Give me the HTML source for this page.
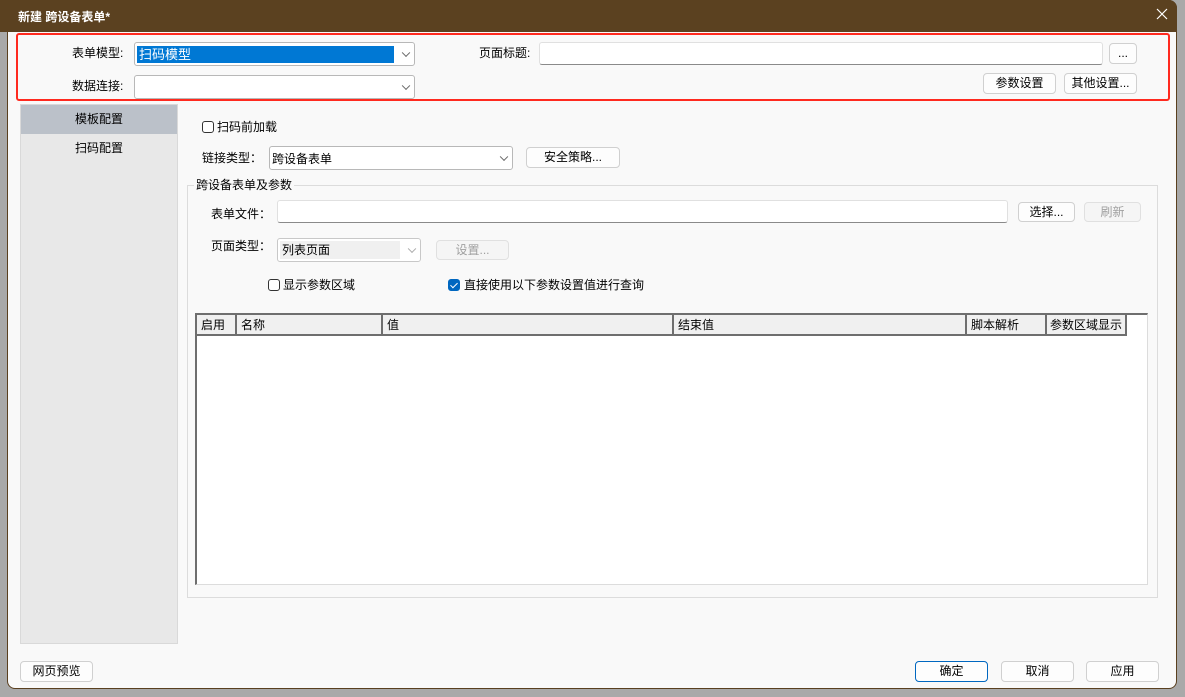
<!DOCTYPE html><html><head><meta charset="utf-8"><style>
*{box-sizing:border-box;margin:0;padding:0}
body{width:1185px;height:697px;background:#a9a9a9;position:relative;overflow:hidden;font-family:"Liberation Sans","Noto Sans CJK SC",sans-serif;font-size:12px;color:#000}
.a{position:absolute}
.win{left:7px;top:0;width:1170px;height:689px;background:#f9f9f9;border:1px solid #5a4020;border-radius:0 8px 8px 8px;overflow:hidden}
.title{left:0;top:0;width:1185px;height:32px;background:#5b4120}
.btn{position:absolute;background:#fdfdfd;border:1px solid #d0d0d0;border-radius:4px;text-align:center;line-height:18px;font-size:12px}
.dis{color:#a0a0a0;background:#f5f5f5;border-color:#e0e0e0}
.combo{position:absolute;background:#fff;border:1px solid #b8b8b8;border-radius:3px}
.combo .ar{position:absolute;right:5px;top:50%;width:6px;height:6px;border-right:1px solid #666;border-bottom:1px solid #666;transform:translateY(-70%) rotate(45deg)}
.inp{position:absolute;background:#fff;border:1px solid #e0e0e0;border-bottom:1px solid #8a8a8a;border-radius:3px}
.lbl{position:absolute;font-size:12px;line-height:16px}
.cb{position:absolute;width:12px;height:12px;border:1px solid #333;border-radius:3px;background:#fff}
.th{position:absolute;top:315px;height:21px;background:#f0f0f0;border-right:2px solid #6e6e6e;border-bottom:2px solid #6e6e6e;padding-left:4px;line-height:20px;font-size:12px}
</style></head><body>
<div class="a win" style="border-radius:0 8px 8px 8px"></div>
<div class="a title" style="left:7px;width:1170px;border-radius:0 8px 0 0"></div>
<div class="a title" style="width:7px"></div>
<div class="a" style="left:18px;top:8px;color:#fff;font-weight:bold;font-size:12px">新建 跨设备表单*</div>
<svg class="a" style="left:1156px;top:8px" width="12" height="12"><path d="M1 1L11 11M11 1L1 11" stroke="#fff" stroke-width="1.2"/></svg>

<div class="a" style="left:16px;top:33px;width:1154px;height:68px;border:2px solid #ff2a1f;border-radius:3px"></div>
<div class="lbl" style="left:72px;top:45px">表单模型:</div>
<div class="combo" style="left:134px;top:42px;width:281px;height:24px"><div class="a" style="left:2px;top:3px;width:257px;height:17px;background:#0078d4;color:#fff;padding-left:2px;line-height:17px;font-size:13px">扫码模型</div><div class="ar"></div></div>
<div class="lbl" style="left:72px;top:78px">数据连接:</div>
<div class="combo" style="left:134px;top:75px;width:281px;height:24px"><div class="ar"></div></div>
<div class="lbl" style="left:479px;top:45px">页面标题:</div>
<div class="inp" style="left:539px;top:42px;width:564px;height:23px"></div>
<div class="btn" style="left:1109px;top:43px;width:28px;height:21px">...</div>
<div class="btn" style="left:983px;top:73px;width:73px;height:21px">参数设置</div>
<div class="btn" style="left:1064px;top:73px;width:73px;height:21px">其他设置...</div>

<div class="a" style="left:20px;top:104px;width:158px;height:540px;background:#e8e8e8;border:1px solid #d9d9d9"></div>
<div class="a" style="left:21px;top:105px;width:156px;height:29px;background:#bbc1c9;text-align:center;line-height:29px">模板配置</div>
<div class="a" style="left:21px;top:134px;width:156px;height:29px;text-align:center;line-height:29px">扫码配置</div>

<div class="cb" style="left:202px;top:121px"></div><div class="lbl" style="left:217px;top:119px">扫码前加载</div>
<div class="lbl" style="left:202px;top:150px">链接类型：</div>
<div class="combo" style="left:269px;top:146px;width:244px;height:24px"><div class="a" style="left:2px;top:3px">跨设备表单</div><div class="ar"></div></div>
<div class="btn" style="left:526px;top:147px;width:94px;height:21px">安全策略...</div>

<div class="a" style="left:187px;top:185px;width:971px;height:413px;border:1px solid #dcdcdc"></div>
<div class="lbl" style="left:194px;top:177px;background:#f9f9f9;padding:0 2px">跨设备表单及参数</div>
<div class="lbl" style="left:211px;top:206px">表单文件：</div>
<div class="inp" style="left:277px;top:200px;width:731px;height:23px"></div>
<div class="btn" style="left:1018px;top:202px;width:57px;height:20px">选择...</div>
<div class="btn dis" style="left:1084px;top:202px;width:57px;height:20px">刷新</div>
<div class="lbl" style="left:211px;top:238px">页面类型：</div>
<div class="combo" style="left:277px;top:238px;width:144px;height:24px;border-color:#c8c8c8"><div class="a" style="left:2px;top:2px;width:120px;height:18px;background:#f0f0f0;padding-left:2px;line-height:18px">列表页面</div><div class="ar" style="border-color:#aaa"></div></div>
<div class="btn dis" style="left:436px;top:240px;width:73px;height:20px">设置...</div>
<div class="cb" style="left:268px;top:279px"></div><div class="lbl" style="left:283px;top:277px">显示参数区域</div>
<div class="cb" style="left:448px;top:279px;background:#0067c0;border-color:#0067c0"><div class="a" style="left:3px;top:1px;width:4px;height:7px;border-right:1.5px solid #fff;border-bottom:1.5px solid #fff;transform:rotate(45deg)"></div></div><div class="lbl" style="left:464px;top:277px">直接使用以下参数设置值进行查询</div>

<div class="a" style="left:195px;top:313px;width:953px;height:272px;background:#fff;border:1px solid #dcdcdc;border-top:2px solid #6e6e6e;border-left:2px solid #6e6e6e"></div>
<div class="th" style="left:197px;width:40px">启用</div>
<div class="th" style="left:237px;width:146px">名称</div>
<div class="th" style="left:383px;width:291px">值</div>
<div class="th" style="left:674px;width:293px">结束值</div>
<div class="th" style="left:967px;width:80px">脚本解析</div>
<div class="th" style="left:1047px;width:80px;padding-left:3px">参数区域显示</div>

<div class="btn" style="left:20px;top:661px;width:73px;height:21px">网页预览</div>
<div class="btn" style="left:915px;top:661px;width:73px;height:21px;border-color:#0067c0">确定</div>
<div class="btn" style="left:1001px;top:661px;width:73px;height:21px">取消</div>
<div class="btn" style="left:1086px;top:661px;width:73px;height:21px">应用</div>
</body></html>
